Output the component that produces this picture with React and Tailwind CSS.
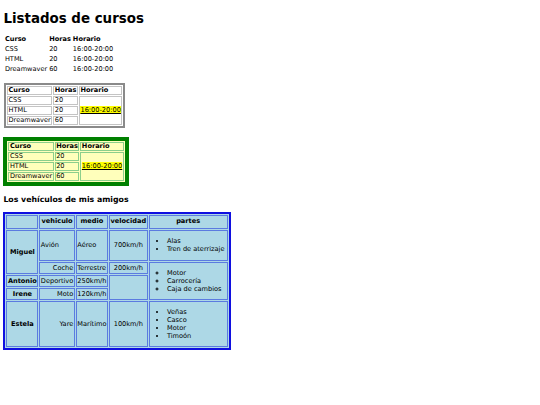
const cursos = [
  { curso: 'CSS', horas: '20' },
  { curso: 'HTML', horas: '20' },
  { curso: 'Dreamwaver', horas: '60' },
];

const headers = ['Curso', 'Horas', 'Horario'];

function Horario() {
  return <span className="bg-[#ffff00] underline">16:00-20:00</span>;
}

const blueCell = 'border border-[#5b7be0] px-[0.5px]';

export default function App() {
  return (
    <main className="min-h-screen bg-white px-[3.4px] pt-[10.5px] text-[6.6px] leading-[8px] text-black font-['DejaVu_Sans',Verdana,sans-serif]">
      <h1 className="mb-[7.4px] text-[13.4px] leading-[15.6px] font-bold">Listados de cursos</h1>

      {/* tabla sin bordes */}
      <table className="border-separate border-spacing-[1px]">
        <thead>
          <tr>
            {headers.map((h) => (
              <th key={h} className="p-[0.5px] text-left font-bold">{h}</th>
            ))}
          </tr>
        </thead>
        <tbody>
          {cursos.map((c) => (
            <tr key={c.curso}>
              <td className="p-[0.5px]">{c.curso}</td>
              <td className="p-[0.5px]">{c.horas}</td>
              <td className="p-[0.5px]">16:00-20:00</td>
            </tr>
          ))}
        </tbody>
      </table>

      {/* tabla con borde gris */}
      <table className="ml-[0.6px] mt-[8.5px] border-separate border-spacing-[1px] border-2 border-[#8a8a8a]">
        <thead>
          <tr>
            {headers.map((h) => (
              <th key={h} className="border border-[#c4c4c4] px-[0.5px] text-left font-bold leading-[7px]">{h}</th>
            ))}
          </tr>
        </thead>
        <tbody>
          {cursos.map((c, i) => (
            <tr key={c.curso}>
              <td className="border border-[#c4c4c4] px-[0.5px] leading-[7px]">{c.curso}</td>
              <td className="border border-[#c4c4c4] px-[0.5px] leading-[7px]">{c.horas}</td>
              {i === 0 ? (
                <td rowSpan={3} className="border border-[#c4c4c4] px-[0.5px] leading-[7px]"><Horario /></td>
              ) : null}
            </tr>
          ))}
        </tbody>
      </table>

      {/* tabla verde */}
      <table className="mt-[9px] border-separate border-spacing-[1px] border-[4px] border-[#008000] bg-[#ffffbb]">
        <thead>
          <tr>
            {headers.map((h) => (
              <th key={h} className="border border-[#8ccf8c] px-[0.5px] text-left font-bold leading-[7px]">{h}</th>
            ))}
          </tr>
        </thead>
        <tbody>
          {cursos.map((c, i) => (
            <tr key={c.curso}>
              <td className="border border-[#8ccf8c] px-[0.5px] leading-[7px]">{c.curso}</td>
              <td className="border border-[#8ccf8c] px-[0.5px] leading-[7px]">{c.horas}</td>
              {i === 0 ? (
                <td rowSpan={3} className="border border-[#8ccf8c] px-[0.5px] leading-[7px]"><Horario /></td>
              ) : null}
            </tr>
          ))}
        </tbody>
      </table>

      <h3 className="mt-[9.5px] mb-[7.4px] text-[7.8px] leading-[9.1px] font-bold">Los vehículos de mis amigos</h3>

      {/* tabla azul */}
      <table className="border-separate border-spacing-[1px] border-2 border-[#1010e0] bg-[#add8e6]">
        <thead>
          <tr>
            <th className={`${blueCell} py-[1.5px] leading-[9px]`}></th>
            <th className={`${blueCell} py-[1.5px] text-center font-bold leading-[9px]`}>vehiculo</th>
            <th className={`${blueCell} py-[1.5px] text-center font-bold leading-[9px]`}>medio</th>
            <th className={`${blueCell} py-[1.5px] text-center font-bold leading-[9px]`}>velocidad</th>
            <th className={`${blueCell} w-[79px] py-[1.5px] text-center font-bold leading-[9px]`}>partes</th>
          </tr>
        </thead>
        <tbody>
          <tr>
            <th rowSpan={2} className={`${blueCell} text-center font-bold`}>Miguel</th>
            <td className={`${blueCell} text-left`}>Avión</td>
            <td className={blueCell}>Aéreo</td>
            <td className={`${blueCell} text-center`}>700km/h</td>
            <td className={blueCell}>
              <ul className="my-[6.5px] list-disc pl-[16.8px]">
                <li>Alas</li>
                <li>Tren de aterrizaje</li>
              </ul>
            </td>
          </tr>
          <tr>
            <td className={`${blueCell} py-[1px] text-right`}>Coche</td>
            <td className={`${blueCell} py-[1px]`}>Terrestre</td>
            <td className={`${blueCell} py-[1px] text-center`}>200km/h</td>
            <td rowSpan={3} className={blueCell}>
              <ul className="my-[6px] list-[circle] pl-[16.8px]">
                <li>Motor</li>
                <li>Carrocería</li>
                <li>Caja de cambios</li>
              </ul>
            </td>
          </tr>
          <tr>
            <th className={`${blueCell} py-[1px] text-center font-bold`}>Antonio</th>
            <td className={`${blueCell} py-[1px] text-right`}>Deportivo</td>
            <td className={`${blueCell} py-[1px]`}>250km/h</td>
            <td rowSpan={2} className={blueCell}></td>
          </tr>
          <tr>
            <th className={`${blueCell} py-[1px] text-center font-bold`}>Irene</th>
            <td className={`${blueCell} py-[1px] text-right`}>Moto</td>
            <td className={`${blueCell} py-[1px]`}>120km/h</td>
          </tr>
          <tr>
            <th className={`${blueCell} text-center font-bold`}>Estela</th>
            <td className={`${blueCell} text-right`}>Yare</td>
            <td className={blueCell}>Marítimo</td>
            <td className={`${blueCell} text-center`}>100km/h</td>
            <td className={blueCell}>
              <ul className="my-[6px] list-disc pl-[16.8px]">
                <li>Veñas</li>
                <li>Casco</li>
                <li>Motor</li>
                <li>Timoón</li>
              </ul>
            </td>
          </tr>
        </tbody>
      </table>
    </main>
  );
}
